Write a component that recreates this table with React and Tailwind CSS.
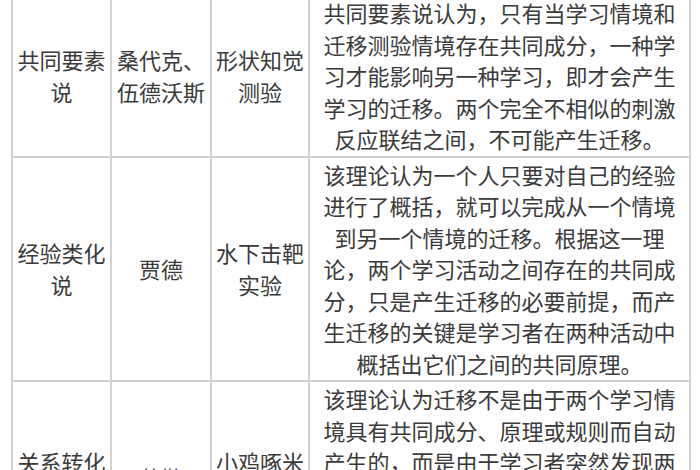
import React from 'react';

const rows = [
  {
    theory: "共同要素说",
    people: "桑代克、伍德沃斯",
    test: "形状知觉测验",
    desc: "共同要素说认为，只有当学习情境和迁移测验情境存在共同成分，一种学习才能影响另一种学习，即才会产生学习的迁移。两个完全不相似的刺激反应联结之间，不可能产生迁移。"
  },
  {
    theory: "经验类化说",
    people: "贾德",
    test: "水下击靶实验",
    desc: "该理论认为一个人只要对自己的经验进行了概括，就可以完成从一个情境到另一个情境的迁移。根据这一理论，两个学习活动之间存在的共同成分，只是产生迁移的必要前提，而产生迁移的关键是学习者在两种活动中概括出它们之间的共同原理。"
  },
  {
    theory: "关系转化说",
    people: "苛勒",
    test: "小鸡啄米实验",
    desc: "该理论认为迁移不是由于两个学习情境具有共同成分、原理或规则而自动产生的，而是由于学习者突然发现两个学习经验之间存在的关系的结果。学习者越能发现和理解事物之间的关系，就越能实现迁移。"
  }
];

const App = () => {
  return (
    <div className="w-[700px] h-[470px] overflow-hidden bg-white">
      <table
        className="ml-[11px] mt-[-6px] w-[678px] table-fixed border-collapse text-[22px] leading-[31.5px] text-[#3b3b3b]"
        style={{ fontFamily: '"Noto Sans CJK SC", "Noto Sans", sans-serif' }}
      >
        <colgroup>
          <col className="w-[99px]" />
          <col className="w-[100px]" />
          <col className="w-[98px]" />
          <col className="w-[381px]" />
        </colgroup>
        <tbody>
          {rows.map((row) => (
            <tr key={row.theory}>
              <td className="border-2 border-[#d2d2d2] px-[3px] py-px text-center align-middle">{row.theory}</td>
              <td className="border-2 border-[#d2d2d2] px-[3px] py-px text-center align-middle">{row.people}</td>
              <td className="border-2 border-[#d2d2d2] px-[3px] py-px text-center align-middle">{row.test}</td>
              <td className="border-2 border-[#d2d2d2] px-[12px] py-px text-center align-middle">{row.desc}</td>
            </tr>
          ))}
        </tbody>
      </table>
    </div>
  );
};

export default App;
